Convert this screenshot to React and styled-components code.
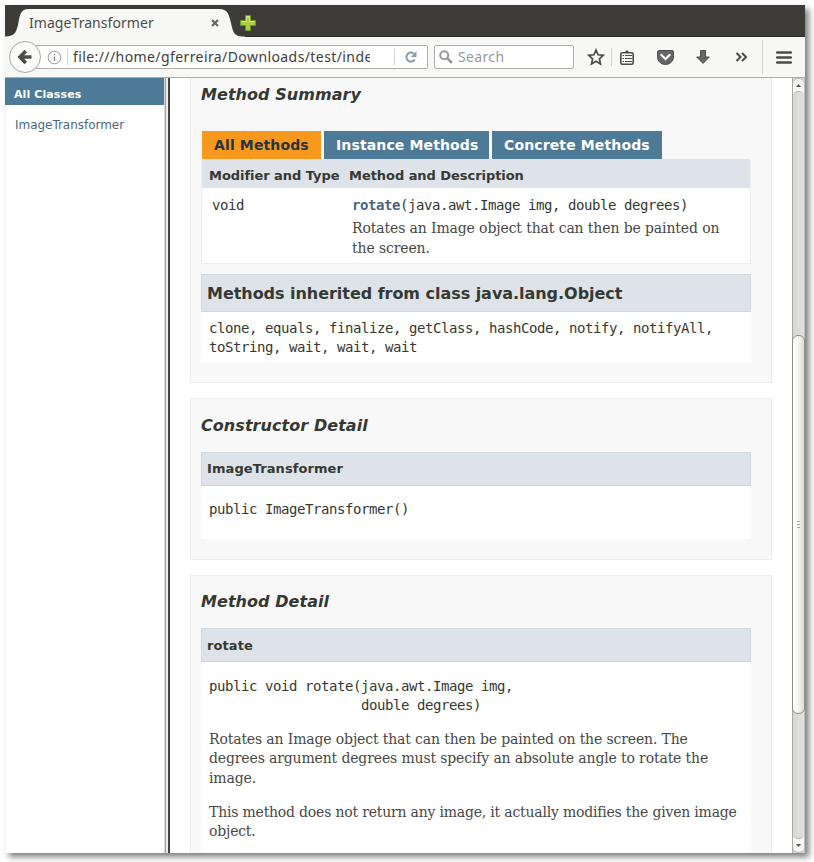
import React from 'react';
import styled, { createGlobalStyle } from 'styled-components';

const Global = createGlobalStyle`
  * { box-sizing: border-box; }
  html, body { margin: 0; background: #fff; }
  body { overflow: hidden; }
  h2, h3, h4, p, pre, ul { margin: 0; padding: 0; font-weight: normal; }
  svg { display: block; flex: none; }
`;

const sans = `'DejaVu Sans', sans-serif`;
const mono = `'DejaVu Sans Mono', monospace`;
const serif = `'DejaVu Serif', serif`;
const ui = `'Noto Sans', 'Open Sans', sans-serif`;

const Page = styled.div`
  width: 814px;
  height: 862px;
  padding: 5px 9px 9px 5px;
  overflow: hidden;
`;
const BrowserWindow = styled.div`
  width: 800px;
  height: 848px;
  display: flex;
  flex-direction: column;
  background: #fff;
  box-shadow: 4px 4px 6px rgba(0, 0, 0, 0.5);
`;

const TabStrip = styled.div`
  height: 32px;
  background: #3c3b37;
  display: flex;
  box-shadow: inset 0 -1px #2c2b28;
`;
const Tab = styled.div`
  position: relative;
  width: 240px;
  height: 32px;
  padding: 0 20px 0 24px;
  display: flex;
  align-items: center;
  justify-content: space-between;
  & > * { position: relative; }
`;
const TabShape = styled.svg`
  && { position: absolute; left: 0; top: 0; }
`;
const TabTitle = styled.span`
  font: 14px/20px ${ui};
  letter-spacing: 0.06px;
  color: #4c4c4c;
  margin-top: 4px;
`;
const CloseIcon = styled.svg`
  margin: 4px 6px 0 0;
`;
const NewTab = styled.div`
  margin: 10px 0 0 -5px;
  position: relative;
`;

const Toolbar = styled.div`
  height: 41px;
  background: #f7f7f5;
  border-bottom: 1px solid #aeaca7;
  display: flex;
  align-items: center;
  padding-left: 4px;
`;
const BackButton = styled.div`
  width: 32px;
  height: 32px;
  flex: none;
  border: 1px solid #a9a7a2;
  border-radius: 50%;
  background: #fbfbfa;
  display: flex;
  align-items: center;
  justify-content: center;
  position: relative;
`;
const UrlBar = styled.div`
  width: 393px;
  height: 24px;
  flex: none;
  margin-left: -6px;
  border: 1px solid #b0aea9;
  border-radius: 0 2px 2px 0;
  background: #fff;
  display: flex;
  align-items: center;
  padding-left: 11px;
`;
const Divider = styled.span`
  width: 1px;
  height: ${p => p.$h || 16}px;
  background: #d0d0cf;
  flex: none;
`;
const UrlText = styled.span`
  width: 297px;
  margin-left: 5px;
  margin-right: 24px;
  overflow: hidden;
  white-space: nowrap;
  font: 14px/22px ${ui};
  letter-spacing: 0.41px;
  color: #3c3c3c;
`;
const SearchBar = styled.div`
  width: 140px;
  height: 24px;
  flex: none;
  margin-left: 6px;
  border: 1px solid #b0aea9;
  border-radius: 2px;
  background: #fff;
  display: flex;
  align-items: center;
  padding-left: 4px;
  gap: 5px;
  font: 14px/22px ${ui};
  letter-spacing: 0.35px;
  color: #999;
`;
const Tools = styled.div`
  display: flex;
  align-items: center;
  margin-left: 13px;
  height: 40px;
`;
const Gap = styled.span`
  width: ${p => p.$w}px;
`;

const Content = styled.div`
  flex: 1;
  min-height: 0;
  display: flex;
`;
const Sidebar = styled.aside`
  width: 159px;
  border-left: 1px solid #f6f6f6;
  font-family: ${sans};
`;
const SidebarTitle = styled.h2`
  height: 27px;
  margin-left: -1px;
  background: #4d7a97;
  color: #fff;
  font-size: 11px;
  font-weight: bold;
  line-height: 33px;
  padding-left: 9px;
  letter-spacing: 0.1px;
`;
const SidebarLink = styled.a`
  display: block;
  color: #4a6782;
  font-size: 12px;
  line-height: 20px;
  padding: 10px 0 0 9px;
  letter-spacing: -0.03px;
`;
const FrameSplit = styled.div`
  width: 6px;
  background: #ededed;
  border-left: 1px solid #d9d9d9;
  border-right: 2px solid #444;
  box-shadow: inset 1px 0 #a0a0a0;
`;
const Main = styled.main`
  width: 622px;
  padding-left: 20px;
  overflow: hidden;
  color: #353833;
`;
const Card = styled.section`
  width: 582px;
  height: ${p => p.$h}px;
  border: 1px solid #ededed;
  border-top-width: ${p => (p.$cut ? 0 : 1)}px;
  background: #f8f8f8;
  padding: ${p => p.$top}px 20px 0 10px;
  margin-bottom: 15px;
`;
const Heading = styled.h3`
  font: italic bold 16px/20px ${sans};
  letter-spacing: 0.06px;
  height: ${p => p.$h}px;
`;
const MethodTabs = styled.div`
  display: flex;
  gap: 3px;
  margin-left: 1px;
`;
const MethodTab = styled.span`
  width: ${p => p.$w}px;
  height: 28px;
  background: ${p => (p.$active ? '#f8981d' : '#4d7a97')};
  color: ${p => (p.$active ? '#253441' : '#fff')};
  font: bold 14px/28px ${sans};
  letter-spacing: 0.13px;
  padding-left: 12px;
  white-space: nowrap;
`;
const Table = styled.div`
  width: 550px;
  height: 105px;
  border: solid #eee;
  border-width: 0 1px 1px;
  background: #fff;
`;
const TableRow = styled.div`
  display: grid;
  grid-template-columns: 140px 1fr;
`;
const TableHead = styled(TableRow)`
  height: 29px;
  background: #dee3e9;
  font: bold 13px/33px ${sans};
  letter-spacing: -0.05px;
  padding-left: 7px;
`;
const TableBody = styled(TableRow)`
  padding: 8px 0 0 10px;
`;
const Code = styled.pre`
  font: 14px/19px ${mono};
  letter-spacing: -0.43px;
`;
const MethodLink = styled.b`
  color: #4a6782;
`;
const Prose = styled.p`
  font: 14px/${p => p.$line || 19.4}px ${serif};
  letter-spacing: ${p => p.$track || -0.14}px;
  color: #474747;
  white-space: pre;
  margin-top: ${p => p.$top || 0}px;
`;
const Bar = styled.h4`
  width: 550px;
  height: ${p => (p.$large ? 38 : 34)}px;
  margin-top: ${p => (p.$large ? 10 : 0)}px;
  border: 1px solid #d0d9e0;
  background: #dee3e9;
  font: bold ${p => (p.$large ? 16 : 13)}px/${p => (p.$large ? 37 : p.$line || 32)}px ${sans};
  letter-spacing: ${p => (p.$large ? -0.04 : 0.08)}px;
  padding-left: 5px;
`;
const Body = styled.div`
  width: 550px;
  height: ${p => p.$h}px;
  background: #fff;
  padding: ${p => p.$top}px 0 0 8px;
`;

const ScrollTrack = styled.div`
  width: 13px;
  display: flex;
  flex-direction: column;
  background: #d8d7d5;
  border-left: 1px solid #aaa8a4;
  border-right: 1px solid #c3c1bd;
`;
const ScrollArrow = styled.div`
  position: relative;
  height: ${p => (p.$down ? 14 : 13)}px;
  border: 1px solid #b5b3ae;
  border-width: ${p => (p.$down ? '0 0 1px' : '1px 0 0')};
  border-radius: ${p => (p.$down ? '0 0 6px 6px' : '6px 6px 0 0')};
  background: #f5f5f3;
  display: flex;
  align-items: center;
  justify-content: center;
`;
const Trough = styled.div`
  flex: 1;
  border: 1px solid #b5b3ae;
  border-width: 1px 0;
  border-radius: 6px;
  background: linear-gradient(90deg, #d8d7d5, #e2e1df);
`;
const TroughBacking = styled.div`
  flex: 1;
  display: flex;
  flex-direction: column;
  background: linear-gradient(#f5f5f3 8px, #d8d7d5 8px, #d8d7d5 calc(100% - 8px), #f5f5f3 calc(100% - 8px));
`;
const ScrollThumb = styled.div`
  height: 379px;
  margin: 243px -1px 0;
  border: 1px solid #8f8d88;
  border-radius: 6px;
  background: linear-gradient(90deg, #fff, #f5f5f4 45%, #dddcd9);
  display: flex;
  flex-direction: column;
  gap: 2px;
  align-items: center;
  justify-content: center;
`;
const GripLine = styled.span`
  width: 3px;
  height: 1px;
  background: #aaa8a4;
`;

const dark = '#4c4c4c';

function TabBar() {
  return (
    <TabStrip>
      <Tab>
        <TabShape width="240" height="32">
          <path d="M0 32V31.5C9 31.5 11 28 13 20C15 10 15 4 24 4H214C223 4 224 10 226 18C228 27 229 31.5 238 31.5H240V32Z" fill="#f7f7f5" />
        </TabShape>
        <TabTitle>ImageTransformer</TabTitle>
        <CloseIcon width="8" height="8" viewBox="0 0 8 8">
          <path d="M1 1L7 7M7 1L1 7" stroke="#666" strokeWidth="2.2" />
        </CloseIcon>
      </Tab>
      <NewTab>
        <svg width="16" height="16" viewBox="0 0 16 16">
          <path d="M5.5 .5H10.5V5.5H15.5V10.5H10.5V15.5H5.5V10.5H.5V5.5H5.5Z" fill="#b0cc45" stroke="#6c9420" />
          <path d="M6.5 6.5V1.5H9.5V6.5H14.5M1.5 6.5H6.5" fill="none" stroke="#d4e79a" />
        </svg>
      </NewTab>
    </TabStrip>
  );
}

function NavBar() {
  return (
    <Toolbar>
      <BackButton>
        <svg width="16" height="16" viewBox="0 0 16 16">
          <path d="M8.8 2L3 8L8.8 14M3 8H14.5" fill="none" stroke={dark} strokeWidth="3.6" />
        </svg>
      </BackButton>
      <UrlBar>
        <svg width="15" height="15" viewBox="0 0 15 15">
          <circle cx="7.5" cy="7.5" r="6.3" fill="none" stroke="#999" />
          <path d="M7.5 6.5V11M7.5 3.7V5.2" stroke="#888" strokeWidth="1.4" />
        </svg>
        <Gap $w={5} />
        <Divider />
        <UrlText>file:///home/gferreira/Downloads/test/index</UrlText>
        <Divider $h={16} />
        <Gap $w={10} />
        <svg width="12" height="12" viewBox="0 0 12 12">
          <path d="M8.8 2.6A4.5 4.5 0 1 0 9.8 8.4" fill="none" stroke="#8b9bab" strokeWidth="2" />
          <path d="M11.5 0V6H5.8Z" fill="#8b9bab" />
        </svg>
      </UrlBar>
      <SearchBar>
        <svg width="14" height="14" viewBox="0 0 14 14">
          <circle cx="5.2" cy="5.2" r="4" fill="none" stroke="#999" strokeWidth="2" />
          <path d="M8.2 8.2L13 13" stroke="#999" strokeWidth="2.6" />
        </svg>
        Search
      </SearchBar>
      <Tools>
        <svg width="18" height="18" viewBox="0 0 18 18">
          <path d="M9 2L11.1 6.8L16.2 7.3L12.4 10.8L13.5 16L9 13.3L4.5 16L5.6 10.8L1.8 7.3L6.9 6.8Z" fill="none" stroke={dark} strokeWidth="1.7" />
        </svg>
        <Gap $w={6} />
        <Divider $h={18} />
        <Gap $w={8} />
        <svg width="14" height="15" viewBox="0 0 14 15">
          <rect x=".8" y="2.8" width="12.4" height="11.4" rx="1.5" fill="#f7f7f5" stroke={dark} strokeWidth="1.6" />
          <path d="M3 3L5 2L7 0L9 2L11 3Z" fill={dark} />
          <path d="M2.5 5.5H4M5 5.5H12M2.5 8.5H4M5 8.5H12M2.5 11.5H4M5 11.5H12" stroke={dark} strokeWidth="1.1" />
        </svg>
        <Gap $w={23} />
        <svg width="17" height="15" viewBox="0 0 17 15">
          <path d="M2 .5H15A1.5 1.5 0 0 1 16.5 2V7A8 7.5 0 0 1 .5 7V2A1.5 1.5 0 0 1 2 .5Z" fill="#666" stroke={dark} />
          <path d="M4.4 5L8.5 9L12.6 5" fill="none" stroke="#fff" strokeWidth="2.2" strokeLinecap="round" />
        </svg>
        <Gap $w={22} />
        <svg width="14" height="14" viewBox="0 0 14 14">
          <path d="M4.5 .5H9.5V7H13.3L7 13.4L.7 7H4.5Z" fill="#666" stroke={dark} />
        </svg>
        <Gap $w={25} />
        <svg width="13" height="10" viewBox="0 0 13 10">
          <path d="M1.5 1L5.5 5L1.5 9M7 1L11 5L7 9" fill="none" stroke={dark} strokeWidth="2" />
        </svg>
        <Gap $w={14} />
        <Divider $h={34} />
        <Gap $w={13} />
        <svg width="16" height="13" viewBox="0 0 16 13">
          <path d="M1.2 1.5H14.8M1.2 6.5H14.8M1.2 11.5H14.8" stroke={dark} strokeWidth="2.6" strokeLinecap="round" />
        </svg>
      </Tools>
    </Toolbar>
  );
}

function MethodSummary() {
  return (
    <Card $cut $top={7} $h={305}>
      <Heading $h={46}>Method Summary</Heading>
      <MethodTabs>
        <MethodTab $active $w={119}>All Methods</MethodTab>
        <MethodTab $w={165}>Instance Methods</MethodTab>
        <MethodTab $w={170}>Concrete Methods</MethodTab>
      </MethodTabs>
      <Table>
        <TableHead>
          <span>Modifier and Type</span>
          <span>Method and Description</span>
        </TableHead>
        <TableBody>
          <Code>void</Code>
          <div>
            <Code><MethodLink>rotate</MethodLink>(java.awt.Image img, double degrees)</Code>
            <Prose $top={3} $line={20} $track={-0.12}>{'Rotates an Image object that can then be painted on\nthe screen.'}</Prose>
          </div>
        </TableBody>
      </Table>
      <Bar $large>Methods inherited from class java.lang.Object</Bar>
      <Body $h={50} $top={7}>
        <Code>{'clone, equals, finalize, getClass, hashCode, notify, notifyAll,\ntoString, wait, wait, wait'}</Code>
      </Body>
    </Card>
  );
}

export default function App() {
  return (
    <Page>
      <Global />
      <BrowserWindow>
        <TabBar />
        <NavBar />
        <Content>
          <Sidebar>
            <SidebarTitle>All Classes</SidebarTitle>
            <SidebarLink>ImageTransformer</SidebarLink>
          </Sidebar>
          <FrameSplit />
          <Main>
            <MethodSummary />
            <Card $top={17} $h={162}>
              <Heading $h={36}>Constructor Detail</Heading>
              <Bar>ImageTransformer</Bar>
              <Body $h={53} $top={14}>
                <Code>public ImageTransformer()</Code>
              </Body>
            </Card>
            <Card $top={16} $h={300}>
              <Heading $h={36}>Method Detail</Heading>
              <Bar $line={34}>rotate</Bar>
              <Body $h={240} $top={15}>
                <Code>{'public void rotate(java.awt.Image img,\n                   double degrees)'}</Code>
                <Prose $top={15}>{'Rotates an Image object that can then be painted on the screen. The\ndegrees argument degrees must specify an absolute angle to rotate the\nimage.'}</Prose>
                <Prose $top={15} $line={19} $track={-0.2}>{'This method does not return any image, it actually modifies the given image\nobject.'}</Prose>
              </Body>
            </Card>
          </Main>
          <ScrollTrack>
            <ScrollArrow>
              <svg width="5" height="3"><path d="M0 3L2.5 0L5 3Z" fill="#555" /></svg>
            </ScrollArrow>
            <TroughBacking>
              <Trough>
                <ScrollThumb>
                  <GripLine /><GripLine /><GripLine />
                </ScrollThumb>
              </Trough>
            </TroughBacking>
            <ScrollArrow $down>
              <svg width="5" height="3"><path d="M0 0L2.5 3L5 0Z" fill="#555" /></svg>
            </ScrollArrow>
          </ScrollTrack>
        </Content>
      </BrowserWindow>
    </Page>
  );
}
